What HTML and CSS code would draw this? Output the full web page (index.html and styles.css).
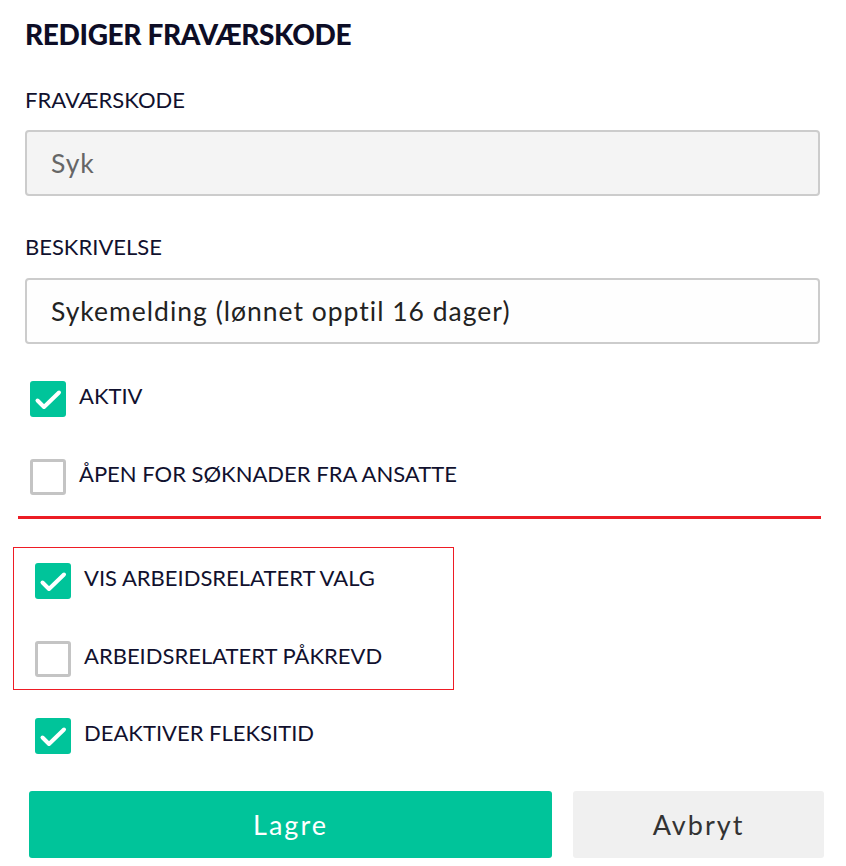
FILE: index.html
```html
<!DOCTYPE html>
<html lang="no">
<head>
<meta charset="utf-8">
<title>Rediger fraværskode</title>
<link rel="stylesheet" href="styles.css">
</head>
<body>
<div class="form">
  <h1 class="title">REDIGER FRAVÆRSKODE</h1>

  <div class="field field-first">
    <div class="label">FRAVÆRSKODE</div>
    <div class="input input-disabled">Syk</div>
  </div>

  <div class="field field-second">
    <div class="label">BESKRIVELSE</div>
    <div class="input">Sykemelding (lønnet opptil 16 dager)</div>
  </div>

  <div class="check-row row-aktiv">
    <span class="box checked"><svg viewBox="0 0 36 36" width="36" height="36"><path d="M7.5 19.5 L14 26 L29 11.5" fill="none" stroke="#fff" stroke-width="4" stroke-linecap="round" stroke-linejoin="round"/></svg></span>
    <span class="check-label">AKTIV</span>
  </div>

  <div class="check-row row-apen">
    <span class="box"></span>
    <span class="check-label">ÅPEN FOR SØKNADER FRA ANSATTE</span>
  </div>

  <div class="divider"></div>

  <div class="group">
    <div class="check-row row-vis">
      <span class="box checked"><svg viewBox="0 0 36 36" width="36" height="36"><path d="M7.5 19.5 L14 26 L29 11.5" fill="none" stroke="#fff" stroke-width="4" stroke-linecap="round" stroke-linejoin="round"/></svg></span>
      <span class="check-label">VIS ARBEIDSRELATERT VALG</span>
    </div>
    <div class="check-row row-pakrevd">
      <span class="box"></span>
      <span class="check-label">ARBEIDSRELATERT PÅKREVD</span>
    </div>
  </div>

  <div class="check-row row-deaktiver">
    <span class="box checked"><svg viewBox="0 0 36 36" width="36" height="36"><path d="M7.5 19.5 L14 26 L29 11.5" fill="none" stroke="#fff" stroke-width="4" stroke-linecap="round" stroke-linejoin="round"/></svg></span>
    <span class="check-label">DEAKTIVER FLEKSITID</span>
  </div>

  <div class="buttons">
    <button class="btn btn-primary">Lagre</button>
    <button class="btn btn-secondary">Avbryt</button>
  </div>
</div>
</body>
</html>
```

FILE: styles.css
```css
html, body {
  margin: 0;
  padding: 0;
  background: #ffffff;
}

body {
  font-family: "Lato", "Liberation Sans", sans-serif;
  color: #0f0f2b;
}

.form {
  width: 846px;
  box-sizing: border-box;
  padding: 17px 26px 0 25px;
  display: flex;
  flex-direction: column;
}

.title {
  margin: 0;
  font-size: 28px;
  line-height: 34px;
  font-weight: 900;
  color: #0d0d26;
  letter-spacing: -0.35px;
}

.field {
  display: flex;
  flex-direction: column;
}

.field-first {
  margin-top: 36px;
}

.field-second {
  margin-top: 38px;
}

.label {
  font-size: 22px;
  line-height: 26px;
  font-weight: 400;
  color: #11112e;
}

.input {
  margin-top: 17px;
  height: 66px;
  box-sizing: border-box;
  border: 2px solid #cccccc;
  border-radius: 4px;
  background: #fefefe;
  padding: 0 0 0 24px;
  display: flex;
  align-items: center;
  font-size: 26.5px;
  letter-spacing: 1px;
  color: #222222;
}

.field-second .input {
  margin-top: 18px;
}

.input-disabled {
  background: #f4f4f4;
  color: #666666;
}

.check-row {
  display: flex;
  align-items: flex-start;
  gap: 13px;
  height: 36px;
  margin-left: 5px;
}

.row-aktiv {
  margin-top: 37px;
}

.row-apen {
  margin-top: 42px;
}

.box {
  width: 36px;
  height: 36px;
  flex: none;
  box-sizing: border-box;
  border-radius: 3px;
  border: 3px solid #c4c4c4;
  background: #ffffff;
}

.box.checked {
  border: none;
  background: #00c49a;
}

.box svg {
  display: block;
}

.check-label {
  font-size: 22px;
  line-height: 26px;
  padding-top: 2px;
  color: #11112e;
}

.divider {
  margin: 21px 0 0 -7px;
  width: 803px;
  height: 3px;
  background: #ec1c24;
}

.group {
  margin: 28px 0 0 -12px;
  width: 441px;
  box-sizing: border-box;
  border: 1px solid #ee1c25;
  padding: 15px 0 12px 21px;
  display: flex;
  flex-direction: column;
  gap: 42px;
}

.group .check-row {
  margin-left: 0;
}

.row-deaktiver {
  margin-top: 28px;
  margin-left: 10px;
}

.buttons {
  margin: 37px -4px 0 4px;
  display: flex;
  gap: 21px;
}

.btn {
  flex: none;
  height: 67px;
  border: none;
  border-radius: 3px;
  font-family: "Lato", "Liberation Sans", sans-serif;
  font-size: 27px;
  letter-spacing: 2px;
  padding: 0;
  cursor: pointer;
}

.btn-primary {
  width: 523px;
  background: #00c49a;
  color: #ffffff;
}

.btn-secondary {
  width: 251px;
  background: #f0f0f0;
  color: #333333;
}
```
